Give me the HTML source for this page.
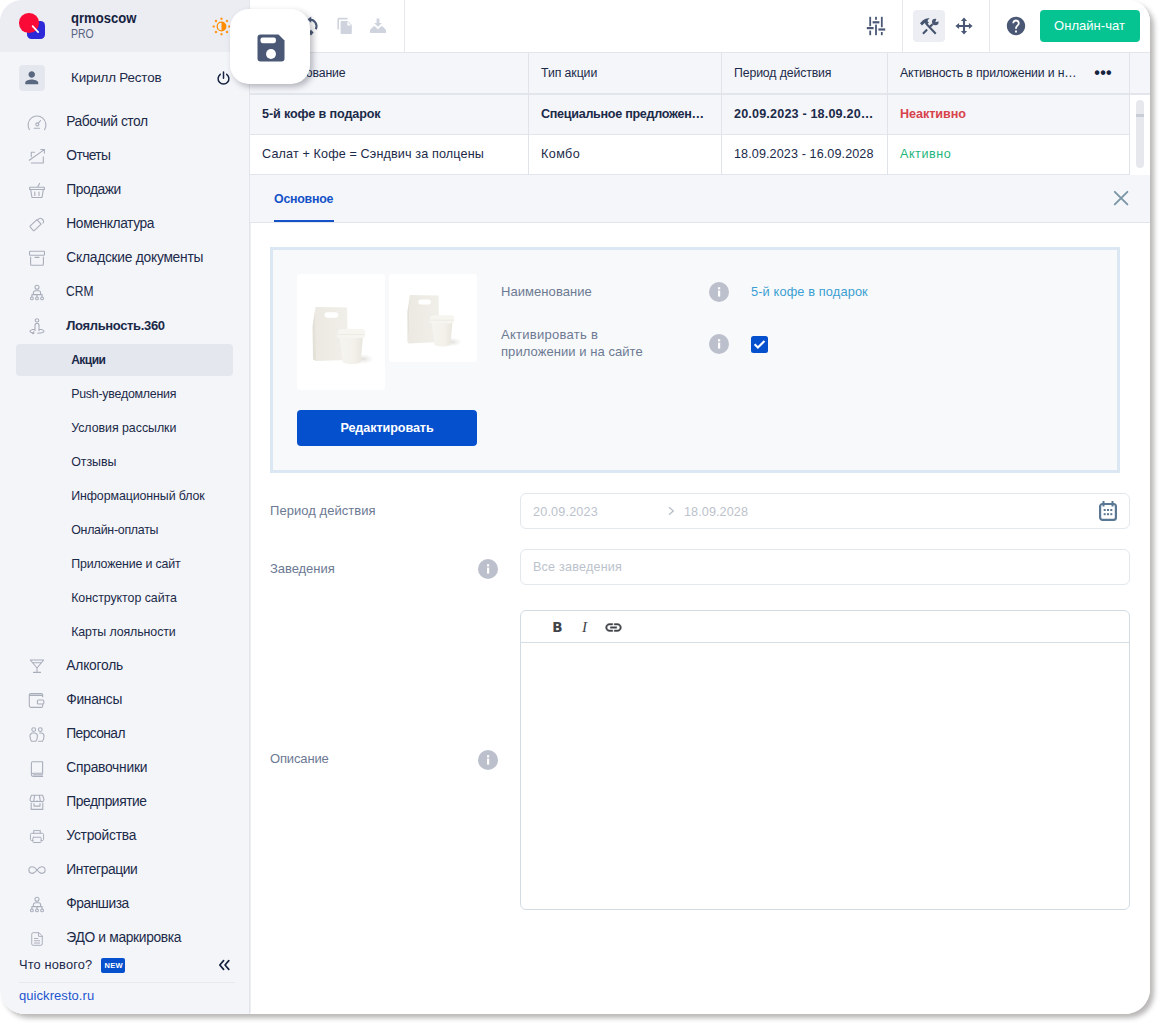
<!DOCTYPE html>
<html lang="ru">
<head>
<meta charset="utf-8">
<title>Quick Resto — Акции</title>
<style>
*{box-sizing:border-box;margin:0;padding:0}
html,body{width:1159px;height:1023px;overflow:hidden;background:#fff}
body{font-family:"Liberation Sans",sans-serif;font-size:13px;color:#1b2a49;position:relative}
#shadow{position:absolute;left:0;top:0;width:1150px;height:1014px;border-radius:22px 22px 25px 25px;box-shadow:4px 4px 5px rgba(60,58,55,.36)}
#frame{position:absolute;left:0;top:0;width:1150px;height:1014px;border-radius:22px 22px 25px 25px;overflow:hidden;background:#fff}
.abs{position:absolute}
.t{position:absolute;white-space:nowrap;line-height:20px;height:20px;margin-top:-10px}
.b{font-weight:bold}
/* sidebar */
#side{position:absolute;left:0;top:0;width:249px;height:1014px;background:#f4f5f9}
#sideline{position:absolute;left:249px;top:0;width:1px;height:1014px;background:#e3e5ec}
#sidehead{position:absolute;left:0;top:0;width:249px;height:52px;background:#ecedf3}
.m{font-size:13.8px;left:66.3px;margin-top:-9px}
.s{font-size:12.4px;left:71.2px}
.ic{position:absolute;left:27px;width:20px;height:20px;margin-top:-10px;stroke:#a9aebb;fill:none;stroke-width:1.1;stroke-linecap:round;stroke-linejoin:round}
/* top bar */
#top{position:absolute;left:250px;top:0;width:900px;height:53px;background:#fff;border-bottom:1px solid #e3e5ec}
.vsep{position:absolute;top:0;width:1px;height:52px;background:#e6e8ee}
/* table */
.row{position:absolute;left:250px;width:880px;height:40px}
.cell{position:absolute;top:0;height:40px;border-right:1px solid #e0e3ea}
.th{font-size:12.3px}
.td{font-size:12.6px}
/* form */
.lab{color:#6c7993;font-size:13px}
.inp{position:absolute;left:520px;width:610px;height:36px;border:1px solid #e3e8ed;border-radius:6px;background:#fff}
.ph{color:#bcc2cc;font-size:12.6px}
.info{position:absolute;width:20px;height:20px;margin:-10px 0 0 -10px}
</style>
</head>
<body>
<div id="shadow"></div>
<div id="frame">

<!-- SIDEBAR -->
<div id="side"></div>
<div id="sidehead"></div>
<div id="sideline"></div>
<!-- logo -->
<div class="abs" style="left:27.200px;top:20.900px;width:17.600px;height:17.800px;border-radius:4.500px;background:#2e29d8"></div>
<div class="abs" style="left:19.300px;top:13.200px;width:19.500px;height:19.500px;border-radius:50%;background:#f90a37"></div>
<svg class="abs" style="left:19px;top:13px" width="28" height="28" viewBox="0 0 28 28"><path d="M13.6 13.2l5.6 6" stroke="#fff" stroke-width="1.7" stroke-linecap="round" fill="none"/></svg>
<div class="t b" style="left:71px;top:17.600px;font-size:15.400px;color:#16233f;transform:scaleX(.85);transform-origin:0 50%">qrmoscow</div>
<div class="t" style="left:71px;top:34px;font-size:12px;color:#56637f;transform:scaleX(.87);transform-origin:0 50%">PRO</div>
<!-- sun -->
<svg class="abs" style="left:211.300px;top:15.700px" width="21" height="21" viewBox="-10.500 -10.500 21 21"><g stroke="#ff8c00" stroke-width="2"><path d="M0-8.800v2M0 8.800v-2M-8.800 0h2M8.800 0h-2M-6.200-6.200l1.400 1.400M6.200 6.200l-1.400-1.400M-6.200 6.200l1.400-1.400M6.200-6.200l-1.400 1.400"/></g><circle r="4.300" fill="none" stroke="#ff8c00" stroke-width="1.300"/><path d="M0-4.300a4.300 4.300 0 0 1 0 8.600z" fill="#ff8c00"/></svg>
<!-- user -->
<div class="abs" style="left:19px;top:65px;width:26px;height:26px;border-radius:4px;background:#e5e7ee"></div>
<svg class="abs" style="left:22.100px;top:68.100px" width="19.500" height="19.500" viewBox="0 0 24 24"><path fill="#5a6780" d="M12 12c2.21 0 4-1.79 4-4s-1.790-4-4-4-4 1.790-4 4 1.790 4 4 4zm0 2c-2.670 0-8 1.340-8 4v2h16v-2c0-2.660-5.330-4-8-4z"/></svg>
<div class="t" style="left:71px;top:77.5px;font-size:13.4px;letter-spacing:-0.17px">Кирилл Рестов</div>
<svg class="abs" style="left:215px;top:70px" width="17" height="17" viewBox="0 0 17 17"><path d="M8.500 2v6.200M5.300 4.300a5.400 5.400 0 1 0 6.400 0" stroke="#14223f" stroke-width="1.500" fill="none" stroke-linecap="round"/></svg>
<!-- menu -->
<div class="t m" style="top:121px;letter-spacing:-0.44px">Рабочий стол</div>
<div class="t m" style="top:155px;letter-spacing:-0.60px">Отчеты</div>
<div class="t m" style="top:189px;letter-spacing:-0.44px">Продажи</div>
<div class="t m" style="top:223px;letter-spacing:-0.40px">Номенклатура</div>
<div class="t m" style="top:257px;letter-spacing:-0.26px">Складские документы</div>
<div class="t m" style="top:291px;transform:scaleX(.875);transform-origin:0 50%">CRM</div>
<div class="t m b" style="top:325px;font-size:13px;letter-spacing:-0.35px">Лояльность.360</div>
<div class="abs" style="left:16px;top:344px;width:217px;height:32px;border-radius:4px;background:#e5e7ef"></div>
<div class="t s b" style="top:359.500px;font-size:12px;letter-spacing:-0.50px">Акции</div>
<div class="t s" style="top:393.500px;letter-spacing:-0.24px">Push-уведомления</div>
<div class="t s" style="top:427.500px;letter-spacing:-0.04px">Условия рассылки</div>
<div class="t s" style="top:461.500px;letter-spacing:-0.04px">Отзывы</div>
<div class="t s" style="top:495.500px;letter-spacing:-0.09px">Информационный блок</div>
<div class="t s" style="top:529.500px;letter-spacing:-0.27px">Онлайн-оплаты</div>
<div class="t s" style="top:563.500px;letter-spacing:-0.17px">Приложение и сайт</div>
<div class="t s" style="top:597.500px;letter-spacing:-0.05px">Конструктор сайта</div>
<div class="t s" style="top:631.500px;letter-spacing:-0.09px">Карты лояльности</div>
<div class="t m" style="top:665px;letter-spacing:-0.21px">Алкоголь</div>
<div class="t m" style="top:699px;letter-spacing:-0.32px">Финансы</div>
<div class="t m" style="top:733px;letter-spacing:-0.59px">Персонал</div>
<div class="t m" style="top:767px;letter-spacing:-0.25px">Справочники</div>
<div class="t m" style="top:801px;letter-spacing:-0.43px">Предприятие</div>
<div class="t m" style="top:835px;letter-spacing:-0.23px">Устройства</div>
<div class="t m" style="top:869px;letter-spacing:-0.41px">Интеграции</div>
<div class="t m" style="top:903px;letter-spacing:-0.48px">Франшиза</div>
<div class="t m" style="top:937px;letter-spacing:-0.33px">ЭДО и маркировка</div>
<!-- icons -->
<svg class="ic" style="top:123px" viewBox="0 0 20 20"><path d="M2.440 16.600A8.900 8.900 0 1 1 17.560 16.600M7.200 15.200h5.400"/><circle cx="10.300" cy="11.400" r="1.500"/><path d="M11.300 10.300l2.200-2.800"/></svg>
<svg class="ic" style="top:156px" viewBox="0 0 20 20"><path d="M7.500 6.200H4.300v4.500M4.300 17h12v-6.300M2.300 14.200l15-10.600M13.800 3.500h3.600v3.600"/></svg>
<svg class="ic" style="top:190px" viewBox="0 0 20 20"><path d="M12.600 3.400l-2.100 3.800M2.700 7.200h14.600v2.300H2.700zM3.700 9.800l1.300 7.700h10l1.300-7.700M7.800 12v3.400M12 12v3.400"/></svg>
<svg class="ic" style="top:224px" viewBox="0 0 20 20"><path d="M3.300 11.800l6.600-6.200 4.200 4.600-6.600 6.200a1 1 0 0 1-1.400 0l-2.800-3.200a1 1 0 0 1 0-1.400zM11.200 5.400a3 3 0 0 1 4.800 3.600"/></svg>
<svg class="ic" style="top:258px" viewBox="0 0 20 20"><rect x="2.500" y="3.300" width="15" height="4" rx="0.800"/><path d="M3.600 9v7.300a1 1 0 0 0 1 1h10.800a1 1 0 0 0 1-1V9M8 9.400h4"/></svg>
<svg class="ic" style="top:293px" viewBox="0 0 20 20"><circle cx="10" cy="4.200" r="2"/><path d="M6.400 11.600V9.800a2 2 0 0 1 2-2h3.200a2 2 0 0 1 2 2v1.800M4.900 14v-2.400h10.200V14M10 11.600V14"/><circle cx="4.900" cy="15.400" r="1.400"/><circle cx="10" cy="15.400" r="1.400"/><circle cx="15.100" cy="15.400" r="1.400"/></svg>
<svg class="ic" style="top:326px" viewBox="0 0 20 20"><ellipse cx="10" cy="4.400" rx="1.800" ry="1.600"/><path d="M8 14.800V9.400a2 2 0 0 1 4 0v5.400M7.800 13.300c-3 .3-4.800 1.100-4.800 2 0 .9 1.500 1.500 3.600 1.800M6.600 15.800l.4 1.400-1.400.5M12.200 13.300c3 .3 4.800 1.100 4.800 2 0 1.100-2.800 1.900-6.400 2"/></svg>
<svg class="ic" style="top:666px" viewBox="0 0 20 20"><path d="M3.300 4h13.400L10 12zM10 12v4.400M6.500 16.400h7M5.600 6.800h8.800"/></svg>
<svg class="ic" style="top:700px" viewBox="0 0 20 20"><path d="M15.700 6.500V5a1.400 1.400 0 0 0-1.400-1.400H3.700A1.400 1.400 0 0 0 2.300 5v10.800a1.600 1.600 0 0 0 1.600 1.600h10.400a1.400 1.400 0 0 0 1.400-1.400v-1.600M2.500 5.400h11.800a1.400 1.400 0 0 1 1.400 1.400"/><rect x="10.400" y="10" width="6.400" height="4" rx="1"/></svg>
<svg class="ic" style="top:735px" viewBox="0 0 20 20"><circle cx="6.700" cy="4.600" r="1.900"/><circle cx="13.300" cy="4.600" r="1.900"/><path d="M4.500 16.300c-1-1.500-1.500-3.500-1.500-5.300a3 3 0 0 1 3-3h1.400a3 3 0 0 1 3 3c0 1.800-.5 3.800-1.500 5.300zM11.500 16.300h4c1-1.500 1.500-3.500 1.500-5.300a3 3 0 0 0-3-3h-1.400"/></svg>
<svg class="ic" style="top:769px" viewBox="0 0 20 20"><path d="M4.400 14.600V4a1.200 1.200 0 0 1 1.200-1.200h10V14.200H6a1.600 1.600 0 0 0 0 3.200h9.600M6.400 15.800h9.200"/></svg>
<svg class="ic" style="top:802px" viewBox="0 0 20 20"><path d="M4.400 3.200h11.200l1.400 4.500a2 2 0 0 1-3.600 1.100 2.300 2.300 0 0 1-3.400 0 2.300 2.300 0 0 1-3.400 0A2 2 0 0 1 3 7.700zM7.600 3.400l-.8 5.400M12.400 3.400l.8 5.400M4.200 11v6.400h11.600V11M7 11.500v2.600h6v-2.600"/></svg>
<svg class="ic" style="top:836px" viewBox="-1.100 -1.100 22.200 22.200"><path d="M6.400 7V3.600l1.200.8 1.200-.8 1.200.8 1.200-.8 1.200.8 1.200-.8V7M5.400 15H4a1.300 1.300 0 0 1-1.300-1.300V8.400A1.400 1.400 0 0 1 4.100 7h11.800a1.400 1.400 0 0 1 1.400 1.400v5.300A1.300 1.300 0 0 1 16 15h-1.400"/><rect x="5.400" y="11.400" width="9.200" height="5.800" rx="0.800"/></svg>
<svg class="ic" style="top:870px" viewBox="0 0 20 20"><path d="M10 10c-1.600-2-2.800-3.200-4.800-3.200a3.300 3.300 0 0 0 0 6.600c2 0 3.200-1.400 4.800-3.400s2.800-3.200 4.800-3.200a3.300 3.300 0 0 1 0 6.600c-2 0-3.200-1.400-4.800-3.400z"/></svg>
<svg class="ic" style="top:905px" viewBox="0 0 20 20"><circle cx="10" cy="4.200" r="2"/><path d="M6.400 11.600V9.800a2 2 0 0 1 2-2h3.200a2 2 0 0 1 2 2v1.800M4.900 14v-2.400h10.200V14M10 11.600V14"/><circle cx="4.900" cy="15.400" r="1.400"/><circle cx="10" cy="15.400" r="1.400"/><circle cx="15.100" cy="15.400" r="1.400"/></svg>
<svg class="ic" style="top:939px" viewBox="-1.400 -1.400 22.800 22.800"><path d="M11.800 2.800H5.600a1.600 1.600 0 0 0-1.600 1.600v11.200a1.600 1.600 0 0 0 1.600 1.600h8.800a1.600 1.600 0 0 0 1.600-1.600V7zv4.200H16M7 9.400h4M7 12h6M7 14.600h6"/></svg>
<!-- bottom -->
<div class="t" style="left:19px;top:964.500px;font-size:12.800px;letter-spacing:0.16px">Что нового?</div>
<div class="abs" style="left:101px;top:958px;width:24px;height:15px;border-radius:2px;background:#0550cd"></div>
<div class="t b" style="left:104.500px;top:966px;font-size:7.500px;color:#fff;letter-spacing:.3px">NEW</div>
<svg class="abs" style="left:217px;top:958px" width="14" height="14" viewBox="0 0 14 14"><path d="M6.600 2.600L2.800 7l3.800 4.400M11.800 2.600L8 7l3.800 4.400" stroke="#14223f" stroke-width="1.700" fill="none" stroke-linecap="round" stroke-linejoin="round"/></svg>
<div class="abs" style="left:19px;top:981.600px;width:216px;height:1px;background:#e6e8ee"></div>
<div class="t" style="left:19px;top:995.500px;font-size:13px;color:#1c55cf;letter-spacing:0.06px">quickresto.ru</div>

<!-- TOPBAR -->
<div id="top"></div>
<!-- top icons -->
<svg class="abs" style="left:300px;top:14px" width="24" height="24" viewBox="0 0 24 24"><path d="M9.300 5.600A6.700 6.700 0 0 1 15.800 15.200" fill="none" stroke="#4a5876" stroke-width="2.100"/><path d="M7.200 5.600L11.200 2.400V8.800z" fill="#4a5876"/><path d="M11 15.800l2.600 2.800-2.600 2.800-2.600-2.800z" fill="#4a5876"/></svg>
<svg class="abs" style="left:336px;top:17px" width="17" height="18" viewBox="0 0 17 18"><path d="M2.200 12.600V2.400a.8.800 0 0 1 .8-.8h8.600" fill="none" stroke="#cfd3de" stroke-width="1.600"/><path d="M5.600 4h6.200L15.800 8v8a1 1 0 0 1-1 1H5.600a1 1 0 0 1-1-1V5a1 1 0 0 1 1-1z" fill="#cfd3de"/><path d="M11.300 4.600v3.900h3.900z" fill="#fff"/></svg>
<svg class="abs" style="left:369px;top:17px" width="18" height="17" viewBox="0 0 18 17"><path d="M7.600 1.600h2.800v4.300h2.500L9 9.700 5.100 5.900h2.500z" fill="#cfd3de"/><path d="M4.600 9.300h1.300L9 12.500l3.100-3.200h1.300l3.600 3.800v2.100a.9.900 0 0 1-.9.900H1.900a.9.900 0 0 1-.9-.9v-2.100z" fill="#cfd3de"/></svg>
<div class="vsep" style="left:404px"></div>
<svg class="abs" style="left:866px;top:16px" width="20" height="20" viewBox="0 0 20 20"><g fill="#4a5876"><rect x="3.300" y="0.800" width="1.800" height="9.400"/><rect x="3.300" y="14.600" width="1.800" height="4.600"/><rect x="0.800" y="11" width="6.800" height="2.200"/><rect x="9.100" y="0.800" width="1.800" height="3"/><rect x="9.100" y="8.600" width="1.800" height="10.600"/><rect x="6.600" y="5.200" width="6.800" height="2.200"/><rect x="14.900" y="0.800" width="1.800" height="10.400"/><rect x="14.900" y="16" width="1.800" height="3.200"/><rect x="12.400" y="12.400" width="6.800" height="2.200"/></g></svg>
<div class="vsep" style="left:902px"></div>
<div class="abs" style="left:913px;top:10px;width:32px;height:32px;border-radius:4px;background:#eceef3"></div>
<svg class="abs" style="left:919px;top:16px" width="20" height="20" viewBox="0 0 20 20"><g fill="#46546f" stroke="none"><path d="M17.500 16.900l-1.500 1.500L6.500 8.500l1.500-1.500z"/><path d="M1 7.300l3-3Q7.200 1.600 10.800 2.300Q8.800 3.500 8.500 5.200l1.400 1.400L7.500 9 5.600 7.100 3 9.500z"/><path d="M3.200 16.900l1.500 1.500 4.200-4.100-1.500-1.500zM10.200 10.100l1.500 1.500 2.600-2.500-1.500-1.500z"/><circle cx="16.300" cy="6" r="3.300"/></g><path d="M16.300 6.300l1.400-4.500 3.500 3.200z" fill="#eceef3"/><path d="M14.400 2.100l2.300 3.600" stroke="#eceef3" stroke-width="0"/></svg>
<svg class="abs" style="left:953.900px;top:16.400px" width="20" height="20" viewBox="0 0 20 20"><path d="M10 4v12M4 10h12" stroke="#4a5876" stroke-width="2.100" fill="none"/><path fill="#4a5876" d="M10 1.400l3.100 3.700H6.900zM10 18.600l3.100-3.700H6.900zM1.400 10l3.700-3.100v6.200zM18.600 10l-3.700-3.100v6.200z"/></svg>
<div class="vsep" style="left:989px"></div>
<svg class="abs" style="left:1005px;top:15px" width="22" height="22" viewBox="0 0 24 24"><path fill="#4a5876" d="M12 2C6.480 2 2 6.480 2 12s4.480 10 10 10 10-4.480 10-10S17.520 2 12 2zm1 17h-2v-2h2v2zm2.070-7.750l-.9.920C13.450 12.900 13 13.500 13 15h-2v-.5c0-1.100.45-2.100 1.170-2.830l1.240-1.260c.37-.36.590-.86.590-1.410 0-1.100-.9-2-2-2s-2 .9-2 2H8c0-2.210 1.790-4 4-4s4 1.790 4 4c0 .88-.36 1.680-.93 2.250z"/></svg>
<div class="abs" style="left:1040px;top:10px;width:100px;height:32px;border-radius:4px;background:#05c491"></div>
<div class="t" style="left:1054px;top:26px;font-size:13px;color:#fff;letter-spacing:0.05px">Онлайн-чат</div>

<!-- MAIN -->
<div id="main"></div>
<!-- table -->
<div class="abs" style="left:250px;top:53px;width:900px;height:42px;background:#f5f6fa;border-bottom:2px solid #e3e5ec"></div>
<div class="abs" style="left:250px;top:95px;width:880px;height:40px;background:#f5f6fa;border-bottom:1px solid #e3e5ec"></div>
<div class="abs" style="left:250px;top:135px;width:880px;height:40px;background:#fff;border-bottom:1px solid #e3e5ec"></div>
<div class="abs" style="left:1130px;top:95px;width:20px;height:80px;background:#fff"></div>
<div class="abs" style="left:528px;top:53px;width:1px;height:122px;background:#e0e3ea"></div>
<div class="abs" style="left:721px;top:53px;width:1px;height:122px;background:#e0e3ea"></div>
<div class="abs" style="left:887px;top:53px;width:1px;height:122px;background:#e0e3ea"></div>
<div class="abs" style="left:1129px;top:53px;width:1px;height:122px;background:#e0e3ea"></div>
<div class="abs" style="left:1136px;top:100px;width:8px;height:68px;border-radius:4px;background:#e6e8ee"></div>
<div class="abs" style="left:1136px;top:114px;width:8px;height:3px;background:#c9cdd6"></div>
<div class="t th" style="left:262px;top:73px;letter-spacing:-0.15px">Наименование</div>
<div class="t th" style="left:541px;top:73px;letter-spacing:-0.08px">Тип акции</div>
<div class="t th" style="left:734px;top:73px;letter-spacing:-0.13px">Период действия</div>
<div class="t th" style="left:900px;top:73px;letter-spacing:-0.15px">Активность в приложении и н…</div>
<div class="t b" style="left:1094.300px;top:72.500px;font-size:16px;letter-spacing:.3px;color:#16233f">•••</div>
<div class="t td b" style="left:262px;top:113.500px;letter-spacing:-0.12px">5-й кофе в подарок</div>
<div class="t td b" style="left:541px;top:113.500px;letter-spacing:-0.30px">Специальное предложен…</div>
<div class="t td b" style="left:734px;top:113.500px;letter-spacing:0.17px">20.09.2023 - 18.09.20…</div>
<div class="t td b" style="left:900px;top:113.500px;color:#d8434b;letter-spacing:-0.06px">Неактивно</div>
<div class="t td" style="left:262px;top:153.500px;letter-spacing:0.14px">Салат + Кофе = Сэндвич за полцены</div>
<div class="t td" style="left:541px;top:153.500px;letter-spacing:0.41px">Комбо</div>
<div class="t td" style="left:734px;top:153.500px;letter-spacing:0.10px">18.09.2023 - 16.09.2028</div>
<div class="t td" style="left:900px;top:153.500px;color:#1db57c;letter-spacing:0.53px">Активно</div>
<!-- tabs -->
<div class="abs" style="left:250px;top:175px;width:900px;height:48px;background:#f5f6fa;border-bottom:1px solid #e3e5ec"></div>
<div class="t b" style="left:274px;top:198.500px;font-size:12.400px;color:#1452c8;letter-spacing:-0.24px">Основное</div>
<div class="abs" style="left:274px;top:220px;width:60px;height:2px;background:#1452c8"></div>
<svg class="abs" style="left:1112px;top:189px" width="18" height="18" viewBox="0 0 18 18"><path d="M2.800 2.800l12.600 12.600M15.400 2.800L2.800 15.400" stroke="#7b96a7" stroke-width="1.900" stroke-linecap="round" fill="none"/></svg>
<div class="abs" style="left:250px;top:223px;width:1px;height:790px;background:#eceef2"></div>
<!-- panel -->
<div class="abs" style="left:270px;top:247px;width:850px;height:226px;border:3px solid #dbe7f3;background:#f8f9fb"></div>
<div class="abs" style="left:297px;top:274px;width:88px;height:116px;border-radius:3px;background:#fff"></div>
<div class="abs" style="left:389px;top:274px;width:88px;height:88px;border-radius:3px;background:#fff"></div>
<svg class="abs" style="left:297px;top:274px" width="88" height="116" viewBox="0 0 88 116"><defs><linearGradient id="gb" x1="0" y1="0" x2="1" y2="0"><stop offset="0" stop-color="#ebe9e1"/><stop offset="1" stop-color="#f1efe9"/></linearGradient><linearGradient id="gc" x1="0" y1="0" x2="1" y2="0"><stop offset="0" stop-color="#f5f4ee"/><stop offset=".6" stop-color="#f3f1ea"/><stop offset="1" stop-color="#e9e6de"/></linearGradient><radialGradient id="gs"><stop offset="0" stop-color="#d8d6d0" stop-opacity=".8"/><stop offset="1" stop-color="#e8e7e3" stop-opacity="0"/></radialGradient></defs><ellipse cx="66" cy="85" rx="11" ry="5" fill="url(#gs)"/><path d="M18.500 33L50 33.500 51.200 86 19 87z" fill="url(#gb)"/><path d="M18.500 33L15.500 52 16 85.500 19 87z" fill="#e4e1d8"/><rect x="27.500" y="38.200" width="13.800" height="5.600" rx="2.800" fill="#fff"/><ellipse cx="66" cy="85" rx="0" ry="0"/><path d="M42.500 62L66 62 63.600 88.500Q54.500 92 45.800 88.500z" fill="url(#gc)"/><path d="M41 57.500Q41 55 44 55L64 55Q68 55 68 57.500L68 61.500Q68 64 65 64L43 64Q40 64 40 61.500z" fill="#f6f5f0"/><path d="M40.500 60.500H67.500" stroke="#eae8e1" stroke-width=".8"/></svg>
<svg class="abs" style="left:389px;top:274px" width="88" height="88" viewBox="0 0 88 88"><ellipse cx="63" cy="68" rx="10" ry="4.500" fill="url(#gs)"/><path d="M21 21L49.500 21.500 50.500 68 19.500 69.500z" fill="url(#gb)"/><path d="M21 21L18.300 38 18.600 68 19.500 69.500z" fill="#e4e1d8"/><rect x="29.300" y="25.600" width="12.600" height="5" rx="2.500" fill="#fff"/><path d="M42.500 47.500L63.500 47.500 61.400 71Q53 74 45.400 71z" fill="url(#gc)"/><path d="M41.200 43.500Q41.200 41.300 44 41.300L62 41.300Q65 41.300 65 43.500L65 47Q65 49.200 62.500 49.200L43.500 49.200Q40.600 49.200 40.600 47z" fill="#f6f5f0"/><path d="M41 46.200H64.800" stroke="#eae8e1" stroke-width=".8"/></svg>
<div class="abs" style="left:297px;top:410px;width:180px;height:36px;border-radius:4px;background:#0550cd"></div>
<div class="t b" style="left:297px;width:180px;text-align:center;top:428px;font-size:12.600px;color:#fff;letter-spacing:-0.08px">Редактировать</div>
<div class="t lab" style="left:501px;top:291.500px;letter-spacing:0.06px">Наименование</div>
<div class="t lab" style="left:501px;top:334.500px;letter-spacing:0.27px">Активировать в</div>
<div class="t lab" style="left:501px;top:351.500px;letter-spacing:0.06px">приложении и на сайте</div>
<div class="t" style="left:751px;top:291.500px;font-size:12.800px;color:#3a9fd3;letter-spacing:0.12px">5-й кофе в подарок</div>
<div class="abs" style="left:751px;top:336px;width:17px;height:17px;border-radius:2.500px;background:#0550cd"></div>
<svg class="abs" style="left:751px;top:336px" width="17" height="17" viewBox="0 0 17 17"><path d="M3.600 8.300l3.300 3.200L13.500 4.900" stroke="#fff" stroke-width="2.100" fill="none"/></svg>
<!-- form -->
<div class="t lab" style="left:270px;top:510.500px;letter-spacing:0.05px">Период действия</div>
<div class="inp" style="top:493px"></div>
<div class="t ph" style="left:533px;top:511.500px;letter-spacing:0.19px">20.09.2023</div>
<svg class="abs" style="left:666.600px;top:506px" width="8" height="10" viewBox="0 0 8 10"><path d="M2 1.200L6.300 5 2 8.800" stroke="#b9bfc9" stroke-width="1.300" fill="none"/></svg>
<div class="t ph" style="left:684px;top:511.500px;letter-spacing:0.10px">18.09.2028</div>
<svg class="abs" style="left:1098px;top:500px" width="20" height="22" viewBox="0 0 20 22"><rect x="2.100" y="4" width="15.800" height="15.900" rx="2.400" fill="none" stroke="#5a7893" stroke-width="2.200"/><path d="M5.500 1v5.600M14.500 1v5.600" stroke="#5a7893" stroke-width="2"/><g fill="#5a7893"><rect x="5.700" y="9" width="2" height="2"/><rect x="9" y="9" width="2" height="2"/><rect x="12.300" y="9" width="2" height="2"/><rect x="5.700" y="13.200" width="2" height="2"/><rect x="9" y="13.200" width="2" height="2"/><rect x="12.300" y="13.200" width="2" height="2"/></g></svg>
<div class="t lab" style="left:270px;top:568.500px;letter-spacing:-0.05px">Заведения</div>
<div class="inp" style="top:549px"></div>
<div class="t ph" style="left:533px;top:566.500px;letter-spacing:0.21px">Все заведения</div>
<div class="abs" style="left:520px;top:610px;width:610px;height:300px;border:1px solid #d3dce3;border-radius:6px;background:#fff"></div>
<div class="abs" style="left:521px;top:642px;width:608px;height:1px;background:#d6dee5"></div>
<div class="t b" style="left:552.300px;top:626.500px;font-size:13.500px;color:#414449;font-family:'DejaVu Sans',sans-serif">B</div>
<div class="t" style="left:582px;top:627px;font-size:15px;color:#414449;font-family:'Liberation Serif',serif;font-style:italic">I</div>
<svg class="abs" style="left:603.600px;top:617.800px" width="19" height="19" viewBox="0 0 24 24"><path fill="#414449" stroke="#414449" stroke-width=".5" d="M3.900 12c0-1.710 1.390-3.100 3.100-3.100h4V7H7c-2.760 0-5 2.240-5 5s2.240 5 5 5h4v-1.900H7c-1.710 0-3.100-1.390-3.100-3.100zM8 13h8v-2H8v2zm9-6h-4v1.900h4c1.710 0 3.100 1.390 3.100 3.100s-1.390 3.100-3.100 3.100h-4V17h4c2.760 0 5-2.240 5-5s-2.240-5-5-5z"/></svg>
<div class="t lab" style="left:270px;top:758.500px;letter-spacing:-0.15px">Описание</div>
<!-- info icons -->
<svg class="info" style="left:718.500px;top:291.500px" viewBox="0 0 20 20"><circle cx="10" cy="10" r="10" fill="#bcc0cc"/><rect x="9" y="8.600" width="2.200" height="6" fill="#fff"/><rect x="9" y="5.200" width="2.200" height="2.200" fill="#fff"/></svg>
<svg class="info" style="left:718.500px;top:343.500px" viewBox="0 0 20 20"><circle cx="10" cy="10" r="10" fill="#bcc0cc"/><rect x="9" y="8.600" width="2.200" height="6" fill="#fff"/><rect x="9" y="5.200" width="2.200" height="2.200" fill="#fff"/></svg>
<svg class="info" style="left:487.500px;top:568.500px" viewBox="0 0 20 20"><circle cx="10" cy="10" r="10" fill="#bcc0cc"/><rect x="9" y="8.600" width="2.200" height="6" fill="#fff"/><rect x="9" y="5.200" width="2.200" height="2.200" fill="#fff"/></svg>
<svg class="info" style="left:487.500px;top:759.500px" viewBox="0 0 20 20"><circle cx="10" cy="10" r="10" fill="#bcc0cc"/><rect x="9" y="8.600" width="2.200" height="6" fill="#fff"/><rect x="9" y="5.200" width="2.200" height="2.200" fill="#fff"/></svg>
<!-- floating save -->
<div class="abs" style="left:230px;top:9px;width:80px;height:75px;border-radius:19px;background:#fff;box-shadow:3px 3px 6px rgba(40,45,60,.32)"></div>
<svg class="abs" style="left:252.500px;top:30px" width="36" height="36" viewBox="0 0 24 24"><path fill="#4a5876" d="M5 3h12l4 4v12a2 2 0 0 1-2 2H5a2 2 0 0 1-2-2V5a2 2 0 0 1 2-2z"/><rect x="5" y="5" width="10.300" height="3.800" rx="1.400" fill="#fff"/><circle cx="12" cy="16" r="3.300" fill="#fff"/></svg>

</div>
</body>
</html>
